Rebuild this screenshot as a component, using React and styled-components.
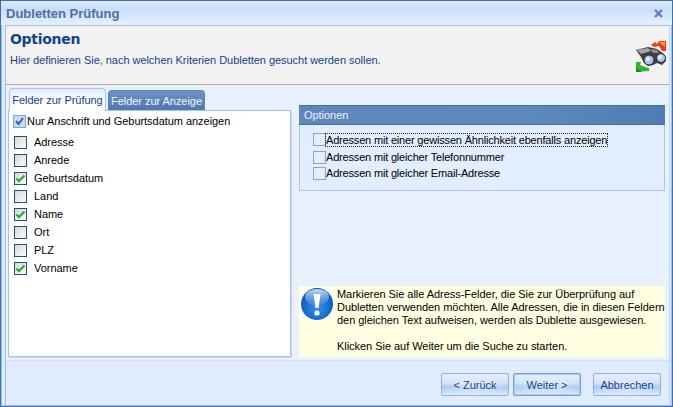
import React from "react";
import styled, { createGlobalStyle } from "styled-components";

const GlobalStyle = createGlobalStyle`
  html, body {
    margin: 0;
    padding: 0;
    background: #e0ecfd;
  }
  body {
    font-family: "Liberation Sans", Arial, sans-serif;
    font-size: 11px;
    letter-spacing: -0.04px;
    color: #000;
  }
`;

const Window = styled.div`
  box-sizing: border-box;
  width: 673px;
  height: 407px;
  display: flex;
  flex-direction: column;
  overflow: hidden;
  border: 1px solid #3f72ab;
  background: #e0ecfd;
`;

const TitleBar = styled.div`
  box-sizing: border-box;
  height: 24px;
  flex: none;
  display: flex;
  align-items: center;
  justify-content: space-between;
  padding: 0 9px 0 5px;
  background: linear-gradient(to bottom, #dfeafa 0%, #c9ddf6 35%, #dce9fb 75%, #e6f0fd 100%);
`;

const TitleText = styled.span`
  font-size: 13px;
  font-weight: bold;
  letter-spacing: 0;
  color: #4a6fa5;
`;

const Frame = styled.div`
  flex: 1;
  min-height: 0;
  display: flex;
  border: 1px solid #9dbfec;
  border-top: none;
  padding: 0 1px 0 3px;
`;

const Client = styled.div`
  flex: 1;
  min-width: 0;
  display: flex;
  flex-direction: column;
  border-top: 1px solid #9dbfec;
  border-left: 1px solid #9dbfec;
  border-right: 1px solid #c4d8f4;
  background: #e0ecfd;
`;

const Header = styled.header`
  box-sizing: border-box;
  height: 59px;
  flex: none;
  display: flex;
  justify-content: space-between;
  padding: 4px 3px 0 4px;
  background: #f2f2f2;
  border-bottom: 1px solid #b3aa9c;
  box-shadow: 0 1px 0 #fff;
`;

const HeaderTitle = styled.h1`
  margin: 0 0 6px;
  font-family: "DejaVu Sans", Verdana, sans-serif;
  font-size: 14px;
  line-height: 18px;
  font-weight: bold;
  letter-spacing: -0.3px;
  color: #15428b;
`;

const HeaderText = styled.p`
  margin: 0;
  line-height: 13px;
  color: #15428b;
`;

const IconSlot = styled.div`
  padding-top: 11px;
`;

const Body = styled.div`
  box-sizing: border-box;
  height: 276px;
  flex: none;
  display: flex;
  gap: 8px;
  padding: 3px 4px 3px 2px;
  background: #e9f1fe;
  border-bottom: 1px solid #cfdff5;
`;

const LeftColumn = styled.div`
  width: 283px;
  flex: none;
  display: flex;
  flex-direction: column;
`;

const TabRow = styled.div`
  height: 22px;
  flex: none;
  display: flex;
  align-items: flex-end;
  gap: 2px;
  padding-left: 1px;
`;

const Tab = styled.div`
  box-sizing: border-box;
  display: flex;
  align-items: center;
  justify-content: center;
  width: ${(p) => p.$width}px;
  height: ${(p) => (p.$active ? 23 : 20)}px;
  border-radius: 4px 4px 0 0;
  position: relative;
  z-index: ${(p) => (p.$active ? 1 : 0)};
  color: ${(p) => (p.$active ? "#15428b" : "#f0f5fd")};
  background: ${(p) =>
    p.$active
      ? "linear-gradient(to bottom, #e2edfc, #fff 60%)"
      : "linear-gradient(to bottom, #6d90c3, #4f78b0)"};
  border: 1px solid ${(p) => (p.$active ? "#a9c6ee" : "#5d85bb")};
  border-bottom: none;
  margin-bottom: ${(p) => (p.$active ? -1 : 0)}px;
`;

const ListPanel = styled.div`
  flex: 1;
  min-height: 0;
  background: #fff;
  border: 1px solid #a4c3ec;
  box-shadow: 1px 1px 0 #c6d9f3;
  padding: 1px 5px;
`;

const CheckRow = styled.label`
  display: flex;
  align-items: center;
  white-space: nowrap;
  height: ${(p) => p.$height || 18}px;
  gap: ${(p) => p.$gap ?? 7}px;
  margin-left: ${(p) => p.$shift || 0}px;
`;

const RowSpacer = styled.div`
  height: 3px;
`;

const Box = styled.span`
  box-sizing: border-box;
  flex: none;
  display: flex;
  align-items: center;
  justify-content: center;
  width: 13px;
  height: 13px;
  border: 1px solid #1c5180;
  background: linear-gradient(135deg, #d8d8d2, #fbfbf9);
`;

const BlueBox = styled(Box)`
  background: ${(p) => (p.$on ? "#c8d9f3" : "#e2edfd")};
  border-color: #86a5d3;
`;

const RightColumn = styled.div`
  flex: 1;
  min-width: 0;
  display: flex;
  flex-direction: column;
  justify-content: space-between;
  padding-top: 17px;
`;

const GroupBox = styled.section`
  height: 85px;
  background: #e2edfd;
  border: 1px solid #a9c7f0;
  border-top: none;
  display: flex;
  flex-direction: column;
`;

const GroupHeader = styled.div`
  box-sizing: border-box;
  height: 20px;
  margin: 0 -1px;
  flex: none;
  display: flex;
  align-items: center;
  padding-left: 5px;
  color: #eef4fd;
  background: linear-gradient(to right, #5f87bb, #5f8abf 60%, #4f7cb3);
  border-top: 1px solid #44709f;
  border-bottom: 1px solid #44709f;
`;

const GroupList = styled.div`
  display: flex;
  flex-direction: column;
  padding: 5px 0 0 13px;
  letter-spacing: -0.18px;
`;

const FocusText = styled.span`
  outline: 1px dotted #222;
`;

const InfoBox = styled.div`
  height: 71px;
  flex: none;
  display: flex;
  gap: 4px;
  padding: 2px 0 0 2px;
  box-sizing: border-box;
  background: #ffffe1;
`;

const InfoIcon = styled.svg`
  flex: none;
  width: 32px;
  height: 32px;
  background: #fff;
`;

const InfoText = styled.p`
  margin: 0;
  line-height: 13px;
  white-space: pre;
`;

const Footer = styled.footer`
  flex: 1;
  min-height: 0;
  display: flex;
  justify-content: flex-end;
  padding: 12px 8px 0 0;
  gap: 4px;
`;

const Button = styled.button`
  box-sizing: border-box;
  width: 68px;
  height: 23px;
  margin-left: ${(p) => p.$gapLeft || 0}px;
  padding: 0;
  font: inherit;
  color: #15428b;
  border: 1px solid ${(p) => (p.$default ? "#6f9fdc" : "#8fb0dc")};
  border-radius: 2px;
  box-shadow: ${(p) => (p.$default ? "inset 0 0 0 1px #a9cbf3" : "none")};
  background:
    radial-gradient(ellipse 50% 50% at 50% 55%, rgba(226, 238, 253, 0.9), rgba(226, 238, 253, 0)),
    linear-gradient(to bottom, #e4effd 0%, #cfe1f8 45%, #a9c9ee 60%, #dcebfc 100%);
`;

const Check = () => (
  <svg width="11" height="9" viewBox="0 0 11 9">
    <path d="M1.5 4.5 L4 7 L9.5 1.5" fill="none" stroke="#2ba12f" strokeWidth="2" />
  </svg>
);

const Binoculars = () => (
  <svg width="31" height="31" viewBox="0 0 31 31">
    <path d="M16 4 L20 1 L22 3 L24 0 L31 0 L31 10 L27 10 L24 5 L19 6 Z" fill="#e8401a" />
    <path d="M24 1 L30 1 L30 6 Z" fill="#f7a030" />
    <path d="M1 9 L13 6 L22 8 L29 13 L31 20 L27 24 L22 22 L18 24 L13 25 L9 22 L6 16 Z" fill="#3f3f3f" />
    <path d="M2 9 L13 7 L16 10 L6 13 Z" fill="#a6a6a6" />
    <path d="M15 8 L22 9 L24 12 L18 12 Z" fill="#8f8f8f" />
    <circle cx="14" cy="19" r="5" fill="#a9c4ea" stroke="#2a2a2a" />
    <circle cx="26" cy="17" r="4.5" fill="#a9c4ea" stroke="#2a2a2a" />
    <circle cx="13" cy="18" r="2" fill="#e4eefb" />
    <circle cx="25" cy="16" r="2" fill="#e4eefb" />
    <path d="M1 21 L6 21 L5 24 L10 26 L14 27 L14 30 L1 31 Z" fill="#2fb52f" />
    <path d="M1 27 L7 31 L1 31 Z" fill="#138a13" />
  </svg>
);

const CloseIcon = () => (
  <svg width="9" height="9" viewBox="0 0 9 9">
    <path d="M1 1 L8 8 M8 1 L1 8" stroke="#5f83b5" strokeWidth="2.4" />
  </svg>
);

const InfoOrb = () => (
  <InfoIcon viewBox="0 0 32 32">
    <defs>
      <radialGradient id="orb" cx="50%" cy="60%" r="60%">
        <stop offset="0%" stopColor="#3f8fe6" />
        <stop offset="70%" stopColor="#1468c8" />
        <stop offset="100%" stopColor="#0d4fa6" />
      </radialGradient>
      <linearGradient id="gloss" x1="0" y1="0" x2="0" y2="1">
        <stop offset="0%" stopColor="#dcebfb" stopOpacity="0.9" />
        <stop offset="100%" stopColor="#9cc6f3" stopOpacity="0.15" />
      </linearGradient>
    </defs>
    <circle cx="16" cy="16" r="16" fill="url(#orb)" />
    <ellipse cx="16" cy="9" rx="12" ry="8" fill="url(#gloss)" />
    <path d="M12.5 6 L19.5 6 L17.5 20 L14.5 20 Z" fill="#fff" />
    <circle cx="16" cy="25" r="2.6" fill="#fff" />
  </InfoIcon>
);

const fields = [
  ["Adresse", false],
  ["Anrede", false],
  ["Geburtsdatum", true],
  ["Land", false],
  ["Name", true],
  ["Ort", false],
  ["PLZ", false],
  ["Vorname", true],
];

export default function App() {
  return (
    <>
      <GlobalStyle />
      <Window>
        <TitleBar>
          <TitleText>Dubletten Prüfung</TitleText>
          <CloseIcon />
        </TitleBar>
        <Frame>
          <Client>
            <Header>
              <div>
                <HeaderTitle>Optionen</HeaderTitle>
                <HeaderText>Hier definieren Sie, nach welchen Kriterien Dubletten gesucht werden sollen.</HeaderText>
              </div>
              <IconSlot>
                <Binoculars />
              </IconSlot>
            </Header>
            <Body>
              <LeftColumn>
                <TabRow>
                  <Tab $active $width={97}>Felder zur Prüfung</Tab>
                  <Tab $width={97}>Felder zur Anzeige</Tab>
                </TabRow>
                <ListPanel>
                  <CheckRow $gap={1} $shift={-1}>
                    <BlueBox $on>
                      <svg width="9" height="9" viewBox="0 0 9 9">
                        <path d="M1 4 L3.5 7 L8 1" fill="none" stroke="#2d5fae" strokeWidth="2" />
                      </svg>
                    </BlueBox>
                    Nur Anschrift und Geburtsdatum anzeigen
                  </CheckRow>
                  <RowSpacer />
                  {fields.map(([label, on]) => (
                    <CheckRow key={label}>
                      <Box>{on && <Check />}</Box>
                      {label}
                    </CheckRow>
                  ))}
                </ListPanel>
              </LeftColumn>
              <RightColumn>
                <GroupBox>
                  <GroupHeader>Optionen</GroupHeader>
                  <GroupList>
                    <CheckRow $gap={0} $height={19}>
                      <BlueBox />
                      <FocusText>Adressen mit einer gewissen Ähnlichkeit ebenfalls anzeigen</FocusText>
                    </CheckRow>
                    <CheckRow $gap={0} $height={16}>
                      <BlueBox />
                      Adressen mit gleicher Telefonnummer
                    </CheckRow>
                    <CheckRow $gap={0} $height={16}>
                      <BlueBox />
                      Adressen mit gleicher Email-Adresse
                    </CheckRow>
                  </GroupList>
                </GroupBox>
                <InfoBox>
                  <InfoOrb />
                  <InfoText>{"Markieren Sie alle Adress-Felder, die Sie zur Überprüfung auf\nDubletten verwenden möchten. Alle Adressen, die in diesen Feldern\nden gleichen Text aufweisen, werden als Dublette ausgewiesen.\n\nKlicken Sie auf Weiter um die Suche zu starten."}</InfoText>
                </InfoBox>
              </RightColumn>
            </Body>
            <Footer>
              <Button>&lt; Zurück</Button>
              <Button $default>Weiter &gt;</Button>
              <Button $gapLeft={8}>Abbrechen</Button>
            </Footer>
          </Client>
        </Frame>
      </Window>
    </>
  );
}
